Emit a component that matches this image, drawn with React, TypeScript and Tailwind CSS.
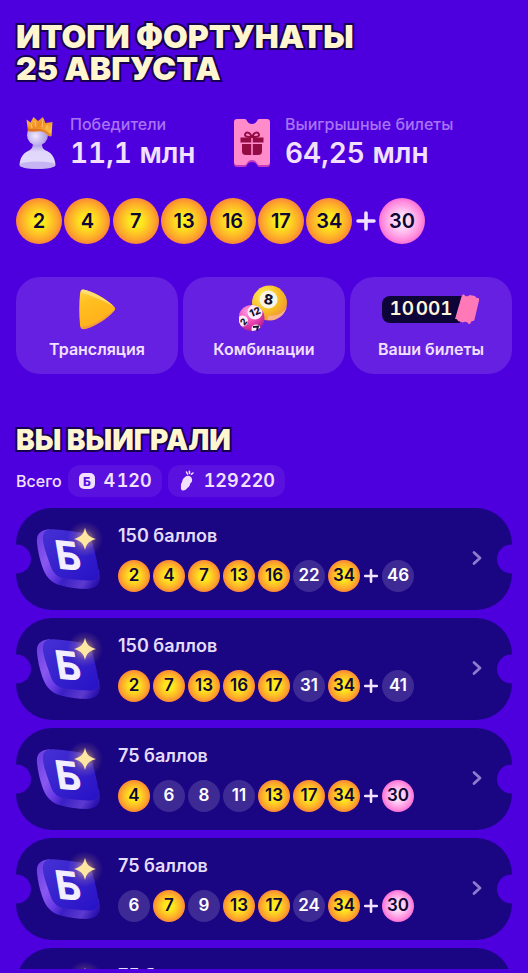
import React from "react";

type Tone = "gold" | "pink" | "miss";

const tones: Record<Tone, string> = {
  gold: "bg-[radial-gradient(closest-side,#fff01c_0%,#fee61e_30%,#fdaa2a_78%,#fc8636_100%)] text-[#0d0636]",
  pink: "bg-[radial-gradient(closest-side,#fff0fc_0%,#ffd3f5_35%,#ff8ade_85%,#fb6fd3_100%)] text-[#0d0636]",
  miss: "bg-[#3e2a95] text-white",
};

function Ball({ value, tone, large = false }: { value: number; tone: Tone; large?: boolean }) {
  const size = large ? "size-[46px] text-xl" : "size-8 text-[17px]";
  return (
    <span className={`flex shrink-0 items-center justify-center rounded-full font-semibold ${size} ${tones[tone]}`}>
      {value}
    </span>
  );
}

function Plus({ large = false }: { large?: boolean }) {
  return (
    <svg viewBox="0 0 16 16" className={large ? "w-[22px] shrink-0" : "w-4 shrink-0"} aria-label="плюс">
      <path d="M8 2.200v11.600M2.200 8h11.600" stroke="#f3e2ff" strokeWidth={2.6} strokeLinecap="round" />
    </svg>
  );
}

function WinnerIcon() {
  return (
    <svg viewBox="0 0 42 54" className="h-[54px] w-[42px]" aria-hidden="true">
      <defs>
        <radialGradient id="pawnHead" cx="40%" cy="55%" r="65%">
          <stop offset="0" stopColor="#f0eaff" />
          <stop offset="1" stopColor="#a48fe4" />
        </radialGradient>
        <linearGradient id="pawnBody" x1="0" y1="0" x2="0" y2="1">
          <stop offset="0" stopColor="#8e7ad8" />
          <stop offset=".4" stopColor="#e0d6fa" />
          <stop offset=".75" stopColor="#e2d9fb" />
          <stop offset="1" stopColor="#b9a4ea" />
        </linearGradient>
        <linearGradient id="crown" x1="0" y1="0" x2="1" y2="1">
          <stop offset="0" stopColor="#f9c04a" />
          <stop offset=".45" stopColor="#f08a24" />
          <stop offset="1" stopColor="#ffd352" />
        </linearGradient>
      </defs>
      <path d="M16 24h11c-2 6-1 9 4 11 6 3 8 8 8.500 14 0 2.500-8 4-18 4s-18-1.500-18-4C4 43 6 38 12 35c4.500-2 6-5 4-11z" fill="url(#pawnBody)" />
      <ellipse cx="21.500" cy="49" rx="17.500" ry="3.500" fill="#c6b5f2" />
      <circle cx="21.500" cy="19" r="10.500" fill="url(#pawnHead)" />
      <path d="M10.500 3.500l4 3 3-5.500L22 5l5-4 2.500 6 7-1-1 14C32.500 21.500 31 17 26 15.500c-6-1-10 1-14-.5z" fill="url(#crown)" />
      <path d="M11.500 12c6 2.500 10 0 15 1.500 5 1 7 5 9.300 4l-.3 2.500C32.500 21.500 31 17 26 15.500c-6-1-10 1-14-.5z" fill="#c9561c" opacity=".5" />
      <path d="M15 8l1 4M19 5l1 6M27 3l-1 8M31 9v4" stroke="#ffe68e" strokeWidth=".8" opacity=".8" />
    </svg>
  );
}

function GiftTicketIcon() {
  return (
    <svg viewBox="0 0 38 50" className="h-[50px] w-[38px]" aria-hidden="true">
      <path d="M4 3h8c2 0 2 5 7 5s5-5 7-5h8c2 0 3 1 3 3v40c0 2-1 3-3 3h-8c-2 0-2-5-7-5s-5 5-7 5H4c-2 0-3-1-3-3V6c0-2 1-3 3-3z" fill="#c43bc0" />
      <path d="M4 1h8c2 0 2 5 7 5s5-5 7-5h8c2 0 3 1 3 3v40c0 2-1 3-3 3h-8c-2 0-2-5-7-5s-5 5-7 5H4c-2 0-3-1-3-3V4c0-2 1-3 3-3z" fill="#ff8bcb" />
      <path d="M7.500 19.500h10.700v5H7.500zM19.800 19.500h10.700v5H19.800zM9 26h9.200v11H13c-2.500 0-4-1-4-3.500zM19.800 26H29v7.500c0 2.500-1.500 3.500-4 3.500h-5.200z" fill="#920b42" />
      <path d="M18.500 19c-1-5.500-6.500-5.500-6.500-2 0 2 3.500 2 6.500 2zM19.500 19c1-5.500 6.500-5.500 6.500-2 0 2-3.500 2-6.500 2z" fill="none" stroke="#920b42" strokeWidth="2" />
    </svg>
  );
}

function PlayIcon() {
  return (
    <svg viewBox="0 0 38 42" className="h-[42px] w-[38px]" aria-hidden="true">
      <defs>
        <linearGradient id="play" x1="0" y1="0" x2=".4" y2="1">
          <stop offset="0" stopColor="#ffd64a" />
          <stop offset=".35" stopColor="#ffc01f" />
          <stop offset="1" stopColor="#ffae1c" />
        </linearGradient>
      </defs>
      <path d="M5 1.500C14 3 29 11 36 18.500c1.500 1.500 1.500 3 0 4.500C29 31 16 39 7 41c-3 .5-4.500-.5-5-4-1-11-1-21 0-31 .3-3 1-4.700 3-4.500z" fill="url(#play)" />
      <path d="M5 1.500C14 3 29 11 36 18.500 28 14 15 8 4 5 3.500 3 4 1.400 5 1.500z" fill="#ffe58a" opacity=".7" />
      <path d="M2.500 39c.7 2 2 2.500 4.500 2 9-2 22-10 29-18 .6-.6 1-1.300 1-2-8 8-22 17-34.500 18z" fill="#f08f4a" opacity=".7" />
    </svg>
  );
}

function LottoBallsIcon() {
  return (
    <svg viewBox="0 0 50 50" className="size-[50px]" aria-hidden="true">
      <defs>
        <radialGradient id="yellowBall" cx="35%" cy="30%" r="80%">
          <stop offset="0" stopColor="#fff36a" />
          <stop offset=".55" stopColor="#f7bd22" />
          <stop offset="1" stopColor="#f08c3c" />
        </radialGradient>
        <radialGradient id="pinkBall" cx="35%" cy="25%" r="80%">
          <stop offset="0" stopColor="#ff9fe0" />
          <stop offset=".6" stopColor="#ea3fb0" />
          <stop offset="1" stopColor="#a9208c" />
        </radialGradient>
        <clipPath id="pinkClip">
          <circle cx="12.500" cy="34" r="13" />
        </clipPath>
      </defs>
      <circle cx="30.500" cy="19" r="17.500" fill="url(#yellowBall)" />
      <path d="M28 35.500c9 3 18-4 20-13-4 7-10 10-18 9z" fill="#ffbfc5" opacity=".6" />
      <circle cx="29.500" cy="15.500" r="9" fill="#f8f4e8" />
      <text x="29.500" y="20.500" textAnchor="middle" fontSize="14" fontWeight="800" fill="#15102a" transform="rotate(8 29.500 15.500)">8</text>
      <circle cx="12.500" cy="34" r="13" fill="url(#pinkBall)" />
      <g clipPath="url(#pinkClip)">
        <circle cx="16" cy="28" r="7.500" fill="#ffeafa" />
        <circle cx="3.500" cy="37" r="5.500" fill="#ffeafa" />
        <circle cx="17" cy="45" r="4.500" fill="#ffeafa" />
      </g>
      <g fontWeight="800" fill="#15102a">
        <text x="16" y="31.500" textAnchor="middle" fontSize="10" transform="rotate(-22 16 28)">12</text>
        <text x="4.500" y="41" textAnchor="middle" fontSize="9" transform="rotate(-50 4.500 37.500)">2</text>
      </g>
      <path d="M14 43l5-.5-1 4" fill="none" stroke="#15102a" strokeWidth="1.800" />
    </svg>
  );
}

function TicketCounter() {
  return (
    <span className="relative mr-5 flex h-[27px] items-center rounded-l-lg bg-[#0d0438] px-[7px] text-[19px] font-semibold text-[#fdf5d8] tabular-nums">
      10{"\u200a"}001
      <svg viewBox="0 0 26 32" className="absolute top-1/2 -right-5 h-8 w-[26px] -translate-y-1/2" aria-hidden="true">
        <path d="M7.500 3.500C8 2 8.500 1.500 10 1.500c1 2 4 2.500 5.500.5l5.500 1c1 2 2 2 3.500 2 .8.500.7 1 .5 2.500l-4.500 19c-.4 1.500-1 1.800-2.500 1.500-1 .5-1 1-1.500 2.500l-2 .5c-1-2.500-4-3-5.500-1.500L4 28c-.5-1.500-1-2-3-2-.6-.7-.5-1.500-.2-2.500z" fill="#ff79b8" />
        <path d="M0 3h7.600L1.500 24.500 1 26l1 3.500H0z" fill="#0d0438" />
      </svg>
    </span>
  );
}

function PointsBadgeIcon() {
  return (
    <svg viewBox="0 0 18 18" className="size-[18px]" aria-hidden="true">
      <rect x="1" y="1" width="16" height="16" rx="5" fill="#f3e0ff" />
      <text x="9" y="13.500" textAnchor="middle" fontSize="12" fontWeight="800" fill="#5a10dd">Б</text>
    </svg>
  );
}

function CarrotIcon() {
  return (
    <svg viewBox="0 0 18 22" className="h-[22px] w-[18px]" aria-hidden="true">
      <path d="M6.500 7.500C9 4.800 13 5.500 14 9c.5 2-.5 3.500-1.800 4.500-.2 2.500-1.400 3.500-2.700 4.300-1 1.700-3 3-5 2.700-1.500-.4-1.800-2-1.500-4-.4-2 .5-3.500 1.200-5 .3-1.600 1-3 2.300-4z" fill="#f3e0ff" />
      <path d="M9.500 4L8.500 2M11.500 3.500l-.1-2.300M13.500 4.200L15 3" stroke="#f3e0ff" strokeWidth="1.600" strokeLinecap="round" />
    </svg>
  );
}

function PointsIcon() {
  return (
    <svg viewBox="0 0 68 68" className="size-[68px] shrink-0 overflow-visible" aria-hidden="true">
      <defs>
        <linearGradient id="chipSide" x1="0" y1=".2" x2="1" y2=".8">
          <stop offset="0" stopColor="#6f40e4" />
          <stop offset=".25" stopColor="#8a58f0" />
          <stop offset=".45" stopColor="#6a3be6" />
          <stop offset=".6" stopColor="#3a1fc4" />
          <stop offset=".85" stopColor="#5d3ad0" />
          <stop offset="1" stopColor="#2c12b0" />
        </linearGradient>
        <linearGradient id="chipFace" x1="0" y1="0" x2="1" y2="1">
          <stop offset="0" stopColor="#4531d4" />
          <stop offset="1" stopColor="#2711c6" />
        </linearGradient>
        <radialGradient id="glow">
          <stop offset="0" stopColor="#ffca72" stopOpacity=".7" />
          <stop offset=".6" stopColor="#ffca72" stopOpacity=".15" />
          <stop offset="1" stopColor="#ffca72" stopOpacity="0" />
        </radialGradient>
      </defs>
      <path d="M15 5.300C6 6 2 10.500 3 19c.8 8 2.400 15 5 23 3.500 10.500 9 17 19 19.500 8 2 17 3.500 25 3.500 8.500 0 13.500-4 14-11l-1-8L40 20z" fill="url(#chipSide)" />
      <path d="M9 17C8 9 11 4.800 19 5.200c9 .5 18 1.500 26 3 8 1.500 12 5 14 12.500 2 8 4.200 17 5.500 25.500 1 7-2.500 10.500-9.500 10.300-8-.2-16-.8-23.500-2C24 53.200 19.500 50 17 43 14 34.500 10.500 26 9 17z" fill="url(#chipFace)" />
      <g transform="matrix(1 .1 .17 1 24 44)">
        <text x="0" y="0" fontSize="38" fontWeight="600" fill="#f3efff" stroke="#f3efff" strokeWidth="1.200" strokeLinejoin="round">Б</text>
      </g>
      <circle cx="51" cy="15" r="18" fill="url(#glow)" />
      <path d="M51 3.500c1.500 7 4 9.500 11 11.500-7 2-9.500 4.500-11 11-1.500-6.500-4-9-11-11 7-2 9.500-4.500 11-11.500z" fill="#ffe7a3" />
    </svg>
  );
}

const draw = [2, 4, 7, 13, 16, 17, 34];
const bonus = 30;

const wins = [
  { points: 150, numbers: [2, 4, 7, 13, 16, 22, 34], extra: 46 },
  { points: 150, numbers: [2, 7, 13, 16, 17, 31, 34], extra: 41 },
  { points: 75, numbers: [4, 6, 8, 11, 13, 17, 34], extra: 30 },
  { points: 75, numbers: [6, 7, 9, 13, 17, 24, 34], extra: 30 },
  { points: 75, numbers: [4, 7, 10, 13, 16, 25, 34], extra: 30 },
];

const stats = [
  { label: "Победители", value: "11,1 млн", icon: <WinnerIcon /> },
  { label: "Выигрышные билеты", value: "64,25 млн", icon: <GiftTicketIcon /> },
];

const actions = [
  { label: "Трансляция", icon: <PlayIcon /> },
  { label: "Комбинации", icon: <LottoBallsIcon /> },
  { label: "Ваши билеты", icon: <TicketCounter /> },
];

const totals = [
  { value: "4\u200a120", icon: <PointsBadgeIcon /> },
  { value: "129\u200a220", icon: <CarrotIcon /> },
];

const titleStyle =
  "font-black uppercase text-[#fff5cf] [-webkit-text-stroke:4px_#160050] [paint-order:stroke_fill]";

export default function App() {
  return (
    <main className="flex h-screen flex-col overflow-hidden bg-[#4d00dd] px-4 pt-[21px] pb-1 font-['Inter','Liberation_Sans',sans-serif] text-[#f3e0ff]">
      <h1 className={`shrink-0 text-[32px] leading-8 ${titleStyle}`}>
        Итоги Фортунаты
        <br />
        25 августа
      </h1>

      <dl className="mt-[29px] grid shrink-0 grid-cols-[215px_auto]">
        {stats.map((s) => (
          <div key={s.label} className="flex gap-3">
            <div className="flex w-[42px] shrink-0 items-center justify-center">{s.icon}</div>
            <div className="whitespace-nowrap">
              <dt className="text-base leading-5 font-medium text-[#a873f5]">{s.label}</dt>
              <dd className="text-[28px] leading-[38px] font-semibold tabular-nums">{s.value}</dd>
            </div>
          </div>
        ))}
      </dl>

      <div className="mt-[26px] flex w-full max-w-[409px] shrink-0 items-center justify-between">
        {draw.map((n) => (
          <Ball key={n} value={n} tone="gold" large />
        ))}
        <Plus large />
        <Ball value={bonus} tone="pink" large />
      </div>

      <nav className="mt-[33px] grid shrink-0 grid-cols-3 gap-[5px]">
        {actions.map((a) => (
          <button key={a.label} type="button" className="flex flex-col items-center rounded-3xl bg-[#6520e1] pt-[7px] pb-[13px]">
            <span className="flex h-[50px] items-center justify-center">{a.icon}</span>
            <span className="mt-[3px] text-base leading-6 font-semibold whitespace-nowrap">{a.label}</span>
          </button>
        ))}
      </nav>

      <h2 className={`mt-[50px] shrink-0 text-[28px] leading-8 ${titleStyle}`}>Вы выиграли</h2>

      <div className="mt-[9px] flex shrink-0 items-center gap-[6px]">
        <span className="text-base font-medium">Всего</span>
        {totals.map((t) => (
          <span key={t.value} className="flex h-8 items-center gap-2 rounded-xl bg-[#5a10de] px-[10px] text-lg font-semibold tabular-nums">
            {t.icon}
            {t.value}
          </span>
        ))}
      </div>

      <ul className="mt-[11px] flex min-h-0 flex-1 flex-col gap-2 overflow-hidden">
        {wins.map((w, i) => (
          <li key={i} className="shrink-0">
            <button
              type="button"
              className="relative flex w-full items-center overflow-hidden rounded-[36px] bg-[#1a0583] pt-4 pr-[29px] pb-[18px] pl-[18px] text-left"
            >
              <span className="absolute top-1/2 -left-[14px] size-[29px] -translate-y-1/2 rounded-full bg-[#4d00dd]" />
              <span className="absolute top-1/2 -right-[14px] size-[29px] -translate-y-1/2 rounded-full bg-[#4d00dd]" />
              <PointsIcon />
              <span className="ml-4 flex flex-1 flex-col gap-3">
                <span className="text-lg leading-6 font-semibold text-[#e5dcfa]">{w.points} баллов</span>
                <span className="flex items-center gap-[3px]">
                  {w.numbers.map((n) => (
                    <Ball key={n} value={n} tone={draw.includes(n) ? "gold" : "miss"} />
                  ))}
                  <Plus />
                  <Ball value={w.extra} tone={w.extra === bonus ? "pink" : "miss"} />
                </span>
              </span>
              <svg viewBox="0 0 12 16" className="h-4 w-3" aria-hidden="true">
                <path d="M3 2.500l6 5.500-6 5.500" fill="none" stroke="#8d7bd0" strokeWidth="2.800" strokeLinecap="round" strokeLinejoin="round" />
              </svg>
            </button>
          </li>
        ))}
      </ul>
    </main>
  );
}
